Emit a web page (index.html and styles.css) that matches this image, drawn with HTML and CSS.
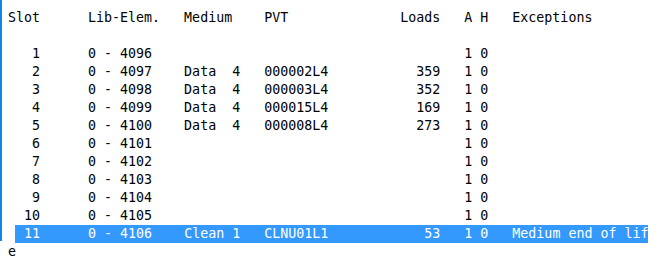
FILE: index.html
```html
<!DOCTYPE html>
<html>
<head>
<meta charset="utf-8">
<link rel="stylesheet" href="styles.css">
</head>
<body>
<div class="term">
<div class="line">Slot      Lib-Elem.   Medium    PVT              Loads   A H   Exceptions</div>
<div class="line"> </div>
<div class="line">   1      0 - 4096                                       1 0</div>
<div class="line">   2      0 - 4097    Data  4   000002L4           359   1 0</div>
<div class="line">   3      0 - 4098    Data  4   000003L4           352   1 0</div>
<div class="line">   4      0 - 4099    Data  4   000015L4           169   1 0</div>
<div class="line">   5      0 - 4100    Data  4   000008L4           273   1 0</div>
<div class="line">   6      0 - 4101                                       1 0</div>
<div class="line">   7      0 - 4102                                       1 0</div>
<div class="line">   8      0 - 4103                                       1 0</div>
<div class="line">   9      0 - 4104                                       1 0</div>
<div class="line">  10      0 - 4105                                       1 0</div>
<div class="line"> <span class="sel"> 11      0 - 4106    Clean 1   CLNU01L1            53   1 0   Medium end of lif</span></div>
</div>
<div class="line wrap">e</div>
</body>
</html>
```
FILE: styles.css
```css
html, body {
  margin: 0;
  padding: 0;
  background: #ffffff;
}
body {
  width: 659px;
  height: 258px;
  overflow: hidden;
  font-family: "DejaVu Sans Mono", "Liberation Mono", monospace;
  font-size: 13.3px;
  color: #000000;
}
.term {
  box-sizing: border-box;
  width: 648px;
  height: 241px;
  border-left: 2px solid #1284e6;
  padding: 9px 0 0 6px;
  overflow-x: clip;
}
.line {
  height: 18px;
  line-height: 18px;
  white-space: pre;
}
.sel {
  display: inline-block;
  width: 660px;
  margin-left: -1px;
  padding-left: 1px;
  background: #3399ff;
  color: #ffffff;
}
.wrap {
  margin-top: 2px;
  padding-left: 8px;
}
```
